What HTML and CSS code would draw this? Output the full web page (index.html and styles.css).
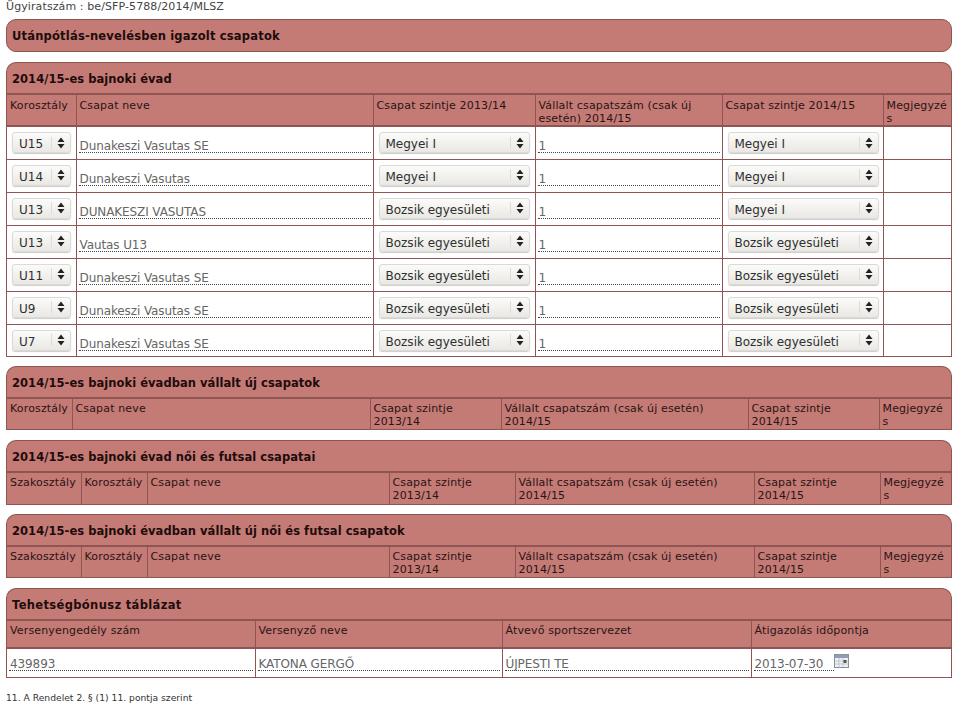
FILE: index.html
```html
<!DOCTYPE html>
<html lang="hu">
<head>
  <meta charset="UTF-8" />
  <title>Tehetségbónusz</title>
  <link rel="stylesheet" href="styles.css">
</head>
<body>
  <svg class="sprites" width="0" height="0">
    <symbol id="updown" viewBox="0 0 9 12"><path d="M4.5 0.5 8 5H1ZM1 7H8L4.5 11.5Z"/></symbol>
  </svg>

  <div class="doc-no">Ügyiratszám : be/SFP-5788/2014/MLSZ</div>

  <div class="panel panel-single"><h2 class="loose">Utánpótlás-nevelésben igazolt csapatok</h2></div>

  <!-- 2014/15 teams -->
  <div class="panel panel-teams">
    <h2>2014/15-es bajnoki évad</h2>
    <table>
      <colgroup><col class="c69"><col class="c297"><col class="c162"><col class="c187"><col class="c161"><col></colgroup>
      <tr><th>Korosztály</th><th>Csapat neve</th><th>Csapat szintje 2013/14</th><th>Vállalt csapatszám (csak új esetén) 2014/15</th><th>Csapat szintje 2014/15</th><th>Megjegyzé<br>s</th></tr>
      <tr>
        <td><div class="select sel-age"><span>U15</span><svg><use href="#updown"/></svg></div></td>
        <td><div class="field">Dunakeszi Vasutas SE</div></td>
        <td><div class="select"><span>Megyei I</span><svg><use href="#updown"/></svg></div></td>
        <td><div class="field">1</div></td>
        <td><div class="select"><span>Megyei I</span><svg><use href="#updown"/></svg></div></td>
        <td></td>
      </tr>
      <tr>
        <td><div class="select sel-age"><span>U14</span><svg><use href="#updown"/></svg></div></td>
        <td><div class="field">Dunakeszi Vasutas</div></td>
        <td><div class="select"><span>Megyei I</span><svg><use href="#updown"/></svg></div></td>
        <td><div class="field">1</div></td>
        <td><div class="select"><span>Megyei I</span><svg><use href="#updown"/></svg></div></td>
        <td></td>
      </tr>
      <tr>
        <td><div class="select sel-age"><span>U13</span><svg><use href="#updown"/></svg></div></td>
        <td><div class="field">DUNAKESZI VASUTAS</div></td>
        <td><div class="select"><span>Bozsik egyesületi</span><svg><use href="#updown"/></svg></div></td>
        <td><div class="field">1</div></td>
        <td><div class="select"><span>Megyei I</span><svg><use href="#updown"/></svg></div></td>
        <td></td>
      </tr>
      <tr>
        <td><div class="select sel-age"><span>U13</span><svg><use href="#updown"/></svg></div></td>
        <td><div class="field">Vautas U13</div></td>
        <td><div class="select"><span>Bozsik egyesületi</span><svg><use href="#updown"/></svg></div></td>
        <td><div class="field">1</div></td>
        <td><div class="select"><span>Bozsik egyesületi</span><svg><use href="#updown"/></svg></div></td>
        <td></td>
      </tr>
      <tr>
        <td><div class="select sel-age"><span>U11</span><svg><use href="#updown"/></svg></div></td>
        <td><div class="field">Dunakeszi Vasutas SE</div></td>
        <td><div class="select"><span>Bozsik egyesületi</span><svg><use href="#updown"/></svg></div></td>
        <td><div class="field">1</div></td>
        <td><div class="select"><span>Bozsik egyesületi</span><svg><use href="#updown"/></svg></div></td>
        <td></td>
      </tr>
      <tr>
        <td><div class="select sel-age"><span>U9</span><svg><use href="#updown"/></svg></div></td>
        <td><div class="field">Dunakeszi Vasutas SE</div></td>
        <td><div class="select"><span>Bozsik egyesületi</span><svg><use href="#updown"/></svg></div></td>
        <td><div class="field">1</div></td>
        <td><div class="select"><span>Bozsik egyesületi</span><svg><use href="#updown"/></svg></div></td>
        <td></td>
      </tr>
      <tr>
        <td><div class="select sel-age"><span>U7</span><svg><use href="#updown"/></svg></div></td>
        <td><div class="field">Dunakeszi Vasutas SE</div></td>
        <td><div class="select"><span>Bozsik egyesületi</span><svg><use href="#updown"/></svg></div></td>
        <td><div class="field">1</div></td>
        <td><div class="select"><span>Bozsik egyesületi</span><svg><use href="#updown"/></svg></div></td>
        <td></td>
      </tr>
    </table>
  </div>

  <div class="panel panel-new">
    <h2>2014/15-es bajnoki évadban vállalt új csapatok</h2>
    <table>
      <colgroup><col class="c65"><col class="c298"><col class="c131"><col class="c247"><col class="c131"><col></colgroup>
      <tr><th>Korosztály</th><th>Csapat neve</th><th>Csapat szintje<br>2013/14</th><th>Vállalt csapatszám (csak új esetén)<br>2014/15</th><th>Csapat szintje<br>2014/15</th><th>Megjegyzé<br>s</th></tr>
    </table>
  </div>

  <div class="panel panel-women">
    <h2>2014/15-es bajnoki évad női és futsal csapatai</h2>
    <table>
      <colgroup><col class="c74"><col class="c66"><col class="c242"><col class="c126"><col class="c239"><col class="c126"><col></colgroup>
      <tr><th>Szakosztály</th><th>Korosztály</th><th>Csapat neve</th><th>Csapat szintje<br>2013/14</th><th>Vállalt csapatszám (csak új esetén)<br>2014/15</th><th>Csapat szintje<br>2014/15</th><th>Megjegyzé<br>s</th></tr>
    </table>
  </div>

  <div class="panel panel-women">
    <h2>2014/15-es bajnoki évadban vállalt új női és futsal csapatok</h2>
    <table>
      <colgroup><col class="c74"><col class="c66"><col class="c242"><col class="c126"><col class="c239"><col class="c126"><col></colgroup>
      <tr><th>Szakosztály</th><th>Korosztály</th><th>Csapat neve</th><th>Csapat szintje<br>2013/14</th><th>Vállalt csapatszám (csak új esetén)<br>2014/15</th><th>Csapat szintje<br>2014/15</th><th>Megjegyzé<br>s</th></tr>
    </table>
  </div>

  <!-- talent bonus -->
  <div class="panel panel-bonus">
    <h2 class="looser">Tehetségbónusz táblázat</h2>
    <table>
      <colgroup><col class="c248"><col class="c247"><col class="c249"><col></colgroup>
      <tr><th>Versenyengedély szám</th><th>Versenyző neve</th><th>Átvevő sportszervezet</th><th>Átigazolás időpontja</th></tr>
      <tr>
        <td><div class="field">439893</div></td>
        <td><div class="field">KATONA GERGŐ</div></td>
        <td><div class="field">ÚJPESTI TE</div></td>
        <td>
          <div class="date-wrap">
            <div class="field field-date">2013-07-30</div>
            <svg class="cal" viewBox="0 0 15 14">
              <rect x="0.5" y="0.5" width="14" height="13" fill="#eef0f4" stroke="#8a8f9c"/>
              <rect x="1" y="1" width="13" height="3" fill="#8f9db8"/>
              <path d="M5 4V13M9 4V13M1 7H14M1 10H14" stroke="#c2c6d0"/>
              <rect x="9.5" y="6" width="3" height="3" fill="#555"/>
            </svg>
          </div>
        </td>
      </tr>
    </table>
  </div>

  <div class="footnote">11. A Rendelet 2. § (1) 11. pontja szerint</div>
</body>
</html>
```

FILE: styles.css
```css
* { box-sizing: border-box; }
body {
  margin: 0;
  padding: 0 8px 0 6px;
  font-family: "DejaVu Sans", sans-serif;
  font-size: 12px;
  color: #333;
  background: #fff;
}
.sprites { position: absolute; }
.doc-no { height: 19px; font-size: 11px; letter-spacing: 0.1px; line-height: 13px; color: #444; }

.panel {
  background: #c47a75;
  border: 1px solid #8f5552;
  border-bottom: 0;
  border-radius: 10px 10px 0 0;
  margin-bottom: 9px;
  overflow: hidden;
}
.panel-single { border-bottom: 1px solid #8f5552; border-radius: 10px; margin-bottom: 10px; }
.panel-new { margin-bottom: 10px; }
.panel-women + .panel-women { margin-bottom: 10px; }
.panel-bonus { margin-bottom: 14px; }
h2 {
  margin: 0;
  height: 30px;
  padding: 9px 0 0 5px;
  font-size: 11.5px;
  letter-spacing: 0.05px;
  line-height: 14px;
  font-weight: bold;
  color: #1e0c0c;
}
.panel-single h2 { height: 31px; }
.loose { letter-spacing: 0.2px; }
.looser { letter-spacing: 0.35px; }

table { width: 100%; table-layout: fixed; border-collapse: collapse; }
th, td { border: 1px solid #8f5552; }
th {
  height: 32px;
  padding: 3px 3px 0 3px;
  vertical-align: top;
  text-align: left;
  font-size: 11px;
  letter-spacing: 0.15px;
  font-weight: normal;
  line-height: 13px;
  color: #2a1414;
}
th:first-child, td:first-child { border-left: 0; }
th:last-child, td:last-child { border-right: 0; }
tr:first-child th { border-top: 2px solid #8f5552; }
.panel-teams th, .panel-bonus th { border-bottom-width: 2px; }
.panel-teams th { padding-top: 4px; }
.panel-bonus tr:first-child th { height: 28px; }
td { height: 33px; background: #fff; vertical-align: top; padding: 5px 2px 0 2px; }
.panel-teams tr:last-child td { height: 32px; }
.panel-bonus td { height: 29px; padding-top: 1px; }

.c65 { width: 65px; } .c66 { width: 66px; } .c69 { width: 69px; } .c74 { width: 74px; }
.c126 { width: 126px; } .c131 { width: 131px; } .c161 { width: 161px; }
.c162 { width: 162px; } .c187 { width: 187px; } .c239 { width: 239px; }
.c242 { width: 242px; } .c247 { width: 247px; } .c248 { width: 248px; }
.c249 { width: 249px; } .c297 { width: 297px; } .c298 { width: 298px; }

.select {
  display: flex;
  align-items: center;
  justify-content: space-between;
  width: 151px;
  height: 21px;
  margin-left: 3px;
  padding-left: 6px;
  background: linear-gradient(#fbfbf9, #e9e8e4);
  border: 1px solid #dcdad6;
  border-radius: 3px;
  box-shadow: 0 1px 1px #cfcdc9;
  color: #2f2f2f;
}
.select span { padding-top: 3px; line-height: 14px; }
.select svg {
  width: 19px;
  height: 12px;
  fill: #222;
  border-left: 1px solid #dedcd8;
}
.sel-age { width: 59px; }

.field {
  height: 21px;
  padding: 7px 0 0 1px;
  line-height: 14px;
  letter-spacing: -0.1px;
  color: #666;
  border-bottom: 1px dotted #444;
}

.date-wrap { display: flex; align-items: flex-start; }
.field-date { width: 80px; }
.cal { width: 15px; height: 14px; margin-top: 4px; }

.footnote { font-size: 9.2px; line-height: 12px; color: #333; }
```
